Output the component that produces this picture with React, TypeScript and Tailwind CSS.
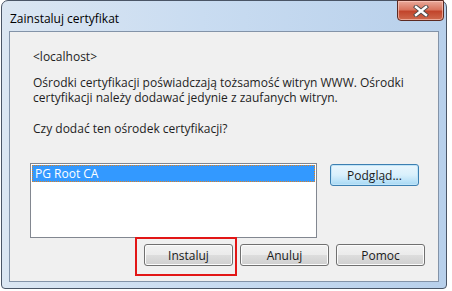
function WinButton({ label, focused }: { label: string; focused?: boolean }) {
  return (
    <div
      className={`w-[89px] h-[22px] rounded-[3px] border flex items-center justify-center text-[12px] text-[#1a1a1a] ${
        focused
          ? "border-[#3c7fb1] bg-gradient-to-b from-[#eaf6fd] via-[#d9f0fc] to-[#a7d9f5] shadow-[inset_0_0_0_1px_#c0e4f8]"
          : "border-[#707070] bg-[linear-gradient(to_bottom,#f2f2f2_0%,#ebebeb_50%,#dddddd_51%,#cfcfcf_100%)] shadow-[inset_0_0_0_1px_#fcfcfc]"
      }`}
    >
      {label}
    </div>
  );
}

export default function App() {
  return (
    <div className="w-[452px] h-[291px] bg-white font-['Open_Sans',sans-serif] text-[12px] leading-[15px] text-[#1e1e1e]">
      <div className="relative ml-[1px] w-[446px] h-[289px] rounded-t-[7px] rounded-b-[4px] border border-[#4a5566] bg-[linear-gradient(to_right,#dbe6f2_0%,#c9dcf1_45%,#b8d0eb_100%)] flex flex-col">
        {/* title bar */}
        <div className="h-[30px] flex items-center pl-[8px] text-[#000] pt-[4px]">
          Zainstaluj certyfikat
        </div>
        <div className="absolute top-[-1px] right-[2px] w-[47px] h-[21px] rounded-b-[4px] border border-[#5c2a22] bg-[linear-gradient(to_bottom,#e9a99a_0%,#d9755f_45%,#c2452c_55%,#cf6a4e_100%)] shadow-[inset_0_0_0_1px_rgba(255,210,200,0.6)] flex items-center justify-center">
          <svg width="16" height="12" viewBox="0 0 16 12">
            <path
              d="M3 2 L13 10 M13 2 L3 10"
              stroke="#4b4b4b"
              strokeWidth="4.2"
              strokeLinecap="square"
            />
            <path
              d="M3 2 L13 10 M13 2 L3 10"
              stroke="#ffffff"
              strokeWidth="2.4"
              strokeLinecap="square"
            />
          </svg>
        </div>

        {/* client area */}
        <div className="mx-[7px] h-[251px] border border-[#8393a8] bg-[#f0f0f0] flex flex-col pl-[20px] pr-[13px] pt-[17px]">
          <div className="pl-[3px]">&lt;localhost&gt;</div>
          <div className="pl-[3px] mt-[11px]">
            <div className="whitespace-nowrap h-[15px]">
              Ośrodki certyfikacji poświadczają tożsamość witryn WWW. Ośrodki
            </div>
            <div className="whitespace-nowrap h-[15px]">
              certyfikacji należy dodawać jedynie z zaufanych witryn.
            </div>
          </div>
          <div className="pl-[3px] mt-[16px]">Czy dodać ten ośrodek certyfikacji?</div>

          <div className="mt-[27px] flex items-start gap-[13px]">
            <div className="w-[287px] h-[75px] border border-[#828790] bg-white p-[1px]">
              <div className="h-[17px] bg-[#3399ff] text-white outline outline-1 outline-dotted outline-[#e08020] -outline-offset-1 pl-[3px] leading-[17px]">
                PG Root CA
              </div>
            </div>
            <div className="mt-[1px]">
              <WinButton label="Podgląd..." focused />
            </div>
          </div>

          <div className="mt-[6px] flex justify-end gap-[7px]">
            <div className="relative">
              <WinButton label="Instaluj" />
              <div className="absolute left-[-9px] top-[-7px] w-[102px] h-[39px] border-2 border-[#e21616]" />
            </div>
            <WinButton label="Anuluj" />
            <WinButton label="Pomoc" />
          </div>
        </div>
      </div>
    </div>
  );
}
